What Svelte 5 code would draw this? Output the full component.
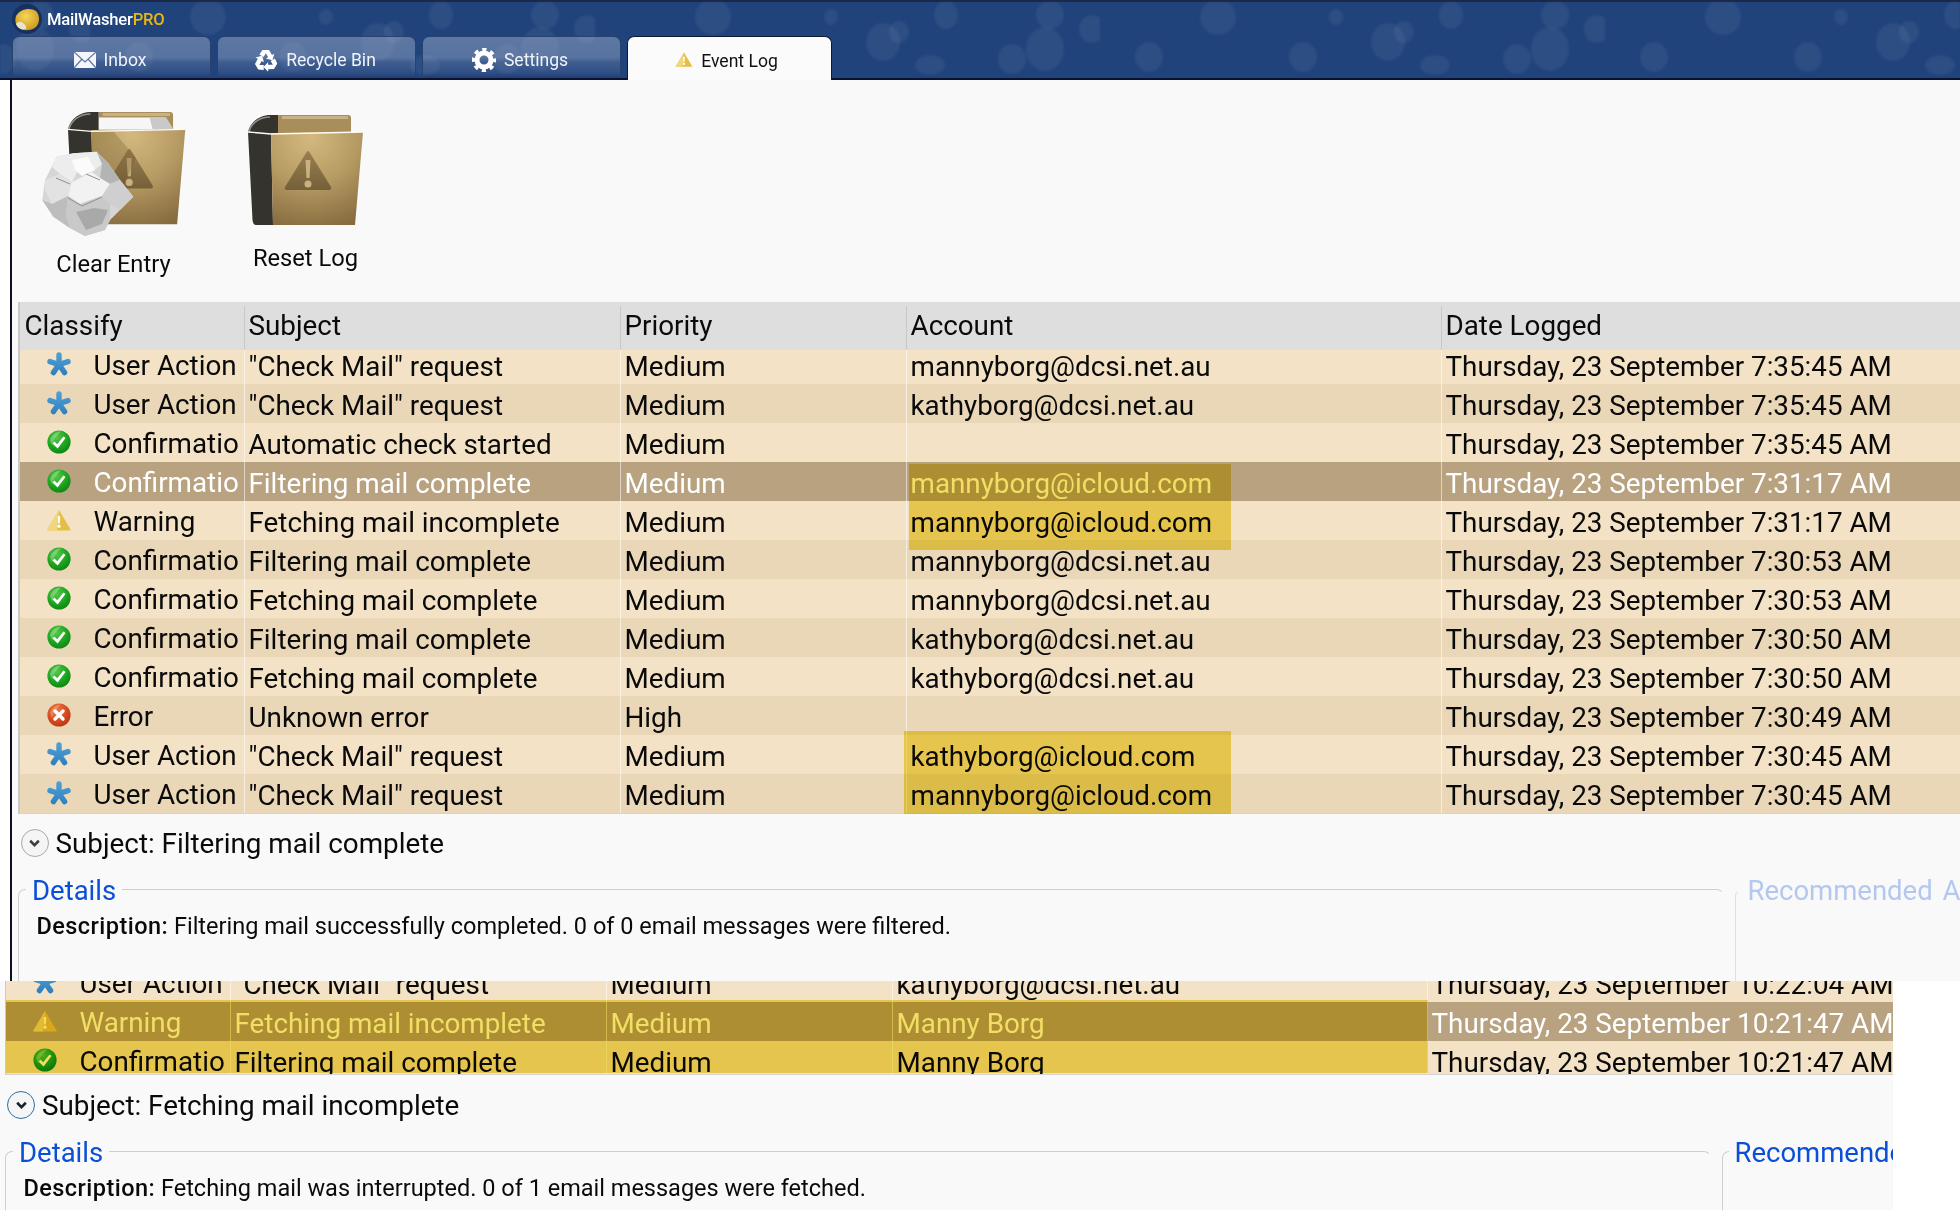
<script lang="ts">
	const tabs = [
		{ label: 'Inbox', icon: 'mail' },
		{ label: 'Recycle Bin', icon: 'recycle' },
		{ label: 'Settings', icon: 'gear' },
		{ label: 'Event Log', icon: 'warn', active: true }
	];

	const action = { icon: 'star', type: 'User Action', subject: '"Check Mail" request' };
	const ok = { icon: 'check', type: 'Confirmation' };
	const day = 'Thursday, 23 September ';

	const rows = [
		{ ...action, account: 'mannyborg@dcsi.net.au', time: '7:35:45 AM', cut: 'cut-top' },
		{ ...action, account: 'kathyborg@dcsi.net.au', time: '7:35:45 AM' },
		{ ...ok, subject: 'Automatic check started', account: '', time: '7:35:45 AM' },
		{ ...ok, subject: 'Filtering mail complete', account: 'mannyborg@icloud.com', time: '7:31:17 AM', selected: true },
		{ icon: 'warn', type: 'Warning', subject: 'Fetching mail incomplete', account: 'mannyborg@icloud.com', time: '7:31:17 AM' },
		{ ...ok, subject: 'Filtering mail complete', account: 'mannyborg@dcsi.net.au', time: '7:30:53 AM' },
		{ ...ok, subject: 'Fetching mail complete', account: 'mannyborg@dcsi.net.au', time: '7:30:53 AM' },
		{ ...ok, subject: 'Filtering mail complete', account: 'kathyborg@dcsi.net.au', time: '7:30:50 AM' },
		{ ...ok, subject: 'Fetching mail complete', account: 'kathyborg@dcsi.net.au', time: '7:30:50 AM' },
		{ icon: 'error', type: 'Error', subject: 'Unknown error', priority: 'High', account: '', time: '7:30:49 AM' },
		{ ...action, account: 'kathyborg@icloud.com', time: '7:30:45 AM' },
		{ ...action, account: 'mannyborg@icloud.com', time: '7:30:45 AM' }
	];

	const laterRows = [
		{ ...action, account: 'kathyborg@dcsi.net.au', time: '10:22:04 AM', cut: 'cut-top' },
		{ icon: 'warn', type: 'Warning', subject: 'Fetching mail incomplete', account: 'Manny Borg', time: '10:21:47 AM', selected: true },
		{ ...ok, subject: 'Filtering mail complete', account: 'Manny Borg', time: '10:21:47 AM', cut: 'cut-bottom' }
	];

	const blobs = [
		[49, 55, 14, 15], [118, 15, 18, 18], [203, 55, 14, 15], [236, 15, 7, 8], [288, 40, 17, 19],
		[304, 30, 10, 11], [335, 63, 15, 10], [351, 13, 12, 14], [417, 57, 14, 15], [450, 47, 19, 22],
		[455, 13, 14, 14], [497, 27, 13, 14]
	];
</script>

{#snippet icon(name)}
	{#if name === 'star'}
		<svg class="status" viewBox="0 0 24 24">
			<g stroke="url(#starBlue)" stroke-width="5.4" stroke-linecap="round">
				<path d="M12 12.5V3" />
				<path d="M12 12.5L3 9.6" />
				<path d="M12 12.5L21 9.6" />
				<path d="M12 12.5L6.4 20.6" />
				<path d="M12 12.5L17.6 20.6" />
			</g>
		</svg>
	{:else if name === 'check'}
		<svg class="status" viewBox="0 0 24 24">
			<circle cx="12" cy="12" r="11.6" fill="url(#okGreen)" />
			<path d="M3 10C5 4 10 1.5 14 1.5C10 5 7 9 5 15Z" fill="#fff" opacity=".28" />
			<path d="M5.5 13.5L7.5 11.5L10.2 14.2L16.5 6.5L18.5 8L10.6 18.5Z" fill="#fff" />
		</svg>
	{:else if name === 'error'}
		<svg class="status" viewBox="0 0 24 24">
			<circle cx="12" cy="12" r="11.6" fill="url(#errRed)" />
			<path d="M3 10C5 4 10 1.5 14 1.5C10 5 7 9 5 15Z" fill="#fff" opacity=".22" />
			<path d="M8 8L16 16M16 8L8 16" stroke="#fff" stroke-width="3.4" stroke-linecap="round" />
		</svg>
	{:else}
		<svg class="status" viewBox="0 0 24 24">
			<path d="M12 2L23.6 21.6Q24 22.4 23 22.4H1Q0 22.4 .4 21.6Z" fill="#e5bf45" />
			<path d="M12 2L.4 21.6Q0 22.4 1 22.4H10Z" fill="#f0d681" />
			<path d="M10.8 8H13.2L12.8 15.6H11.2Z" fill="#fff" />
			<circle cx="12" cy="18.2" r="1.6" fill="#fff" />
		</svg>
	{/if}
{/snippet}

{#snippet row(r, i)}
	<div class="row {r.cut ?? ''}" class:alt={i % 2 === 1} class:selected={r.selected}>
		<div class="cell classify">{@render icon(r.icon)}<span class="kind">{r.type}</span></div>
		<div class="cell">{r.subject}</div>
		<div class="cell">{r.priority ?? 'Medium'}</div>
		<div class="cell">{r.account}</div>
		<div class="cell">{day}{r.time}</div>
	</div>
{/snippet}

{#snippet book(pages)}
	<path d="M30 0H100Q103 0 103 3V20H30Z" fill="#a98e5c" />
	<path d="M34 1H100V4H34Z" fill="#c9b384" />
	{#if pages}
		<path d="M26 5H96L104 18H24Z" fill="#c9c9c9" />
		<path d="M30 6H80L83 17H28Z" fill="#f6f6f6" />
	{/if}
	<path d="M0 17C2 7 12 0 22 0H30V18L23 18L25 110H8Q5 110 4.500 105Z" fill="#35332e" />
	<path d="M1 17C3 8 12 2 22 2" fill="none" stroke="#8f8f8f" stroke-width="1.500" />
	<path d="M23 18L115 17L107 110H25Z" fill="url(#coverTan)" />
	<path d="M0 17L23 19L115 17" fill="none" stroke="#fdfbf3" stroke-width="1.300" />
	<path d="M60 36Q61 36 62 38L83 72Q84 75 81 75H39Q36 75 37 72L58 38Q59 36 60 36Z" fill="url(#markBrown)" />
	<path d="M57.500 45H62.500L61.500 63H58.500Z" fill="#c9b27f" />
	<circle cx="60" cy="69" r="3.500" fill="#c9b27f" />
{/snippet}

<svg class="defs" aria-hidden="true">
	<defs>
		<linearGradient id="starBlue" gradientUnits="userSpaceOnUse" x1="0" y1="2" x2="0" y2="23">
			<stop offset="0" stop-color="#4f9fd6" />
			<stop offset="1" stop-color="#2f7fbd" />
		</linearGradient>
		<radialGradient id="okGreen" cx=".4" cy=".3" r=".8">
			<stop offset="0" stop-color="#55c84a" />
			<stop offset=".6" stop-color="#1aa11c" />
			<stop offset="1" stop-color="#0b7d12" />
		</radialGradient>
		<radialGradient id="errRed" cx=".4" cy=".3" r=".8">
			<stop offset="0" stop-color="#ee7a45" />
			<stop offset=".6" stop-color="#d4481c" />
			<stop offset="1" stop-color="#b2300f" />
		</radialGradient>
		<radialGradient id="coverTan" gradientUnits="userSpaceOnUse" cx="62" cy="22" r="95">
			<stop offset="0" stop-color="#d3b97f" />
			<stop offset=".5" stop-color="#b69a63" />
			<stop offset="1" stop-color="#856b3e" />
		</radialGradient>
		<linearGradient id="markBrown" x1="0" y1="0" x2="0" y2="1">
			<stop offset="0" stop-color="#9a8050" />
			<stop offset="1" stop-color="#75603a" />
		</linearGradient>
		<radialGradient id="soapGold" cx=".45" cy=".35" r=".7">
			<stop offset="0" stop-color="#f6d65a" />
			<stop offset="1" stop-color="#c9961a" />
		</radialGradient>
		<pattern id="bubbles" width="505" height="80" patternUnits="userSpaceOnUse" x="90">
			{#each blobs as [cx, cy, rx, ry]}
				<ellipse {cx} {cy} {rx} {ry} fill="#fff" opacity=".06" />
			{/each}
		</pattern>
	</defs>
</svg>

<div class="page">
	<div class="first-shot">
		<header class="titlebar">
			<svg class="texture" width="100%" height="78"><rect width="100%" height="78" fill="url(#bubbles)" /></svg>
			<div class="brand">
				<svg class="logo" viewBox="0 0 30 30">
					<circle cx="15" cy="15" r="15" fill="#18305c" />
					<path d="M4 12C8 5 18 3 24 7C28 11 28 19 24 23C18 28 8 27 5 22C3 19 3 15 4 12Z" fill="url(#soapGold)" />
					<path d="M4 20Q7 16 11 19T14 25Q7 27 4 20Z" fill="#e8e4d2" />
				</svg>
				<span>MailWasher<b>PRO</b></span>
			</div>
			<nav class="tabs">
				{#each tabs as t}
					<div class="tab" class:active={t.active}>
						{#if t.icon === 'mail'}
							<svg class="tab-icon" viewBox="0 0 22 18">
								<path d="M0 1H22V17H0Z" fill="#f4f6fa" />
								<path d="M0 1L11 11L22 1M0 17L8 8M22 17L14 8" fill="none" stroke="#5d76a3" stroke-width="1.200" />
							</svg>
						{:else if t.icon === 'recycle'}
							<svg class="tab-icon tall" viewBox="0 0 24 24" fill="#fff">
								{#each [0, 120, 240] as a}
									<g transform="rotate({a} 12 13)">
										<path d="M8.500 2H15L18 7L20.300 5.700L18.400 12.200L11.900 10.600L14.200 9.300L11.800 5.200L9.600 9L5.400 6.600Z" />
									</g>
								{/each}
							</svg>
						{:else if t.icon === 'gear'}
							<svg class="tab-icon tall" viewBox="0 0 24 24">
								<circle cx="12" cy="12" r="7" fill="none" stroke="#fff" stroke-width="5" />
								<circle cx="12" cy="12" r="10.500" fill="none" stroke="#fff" stroke-width="3.600" stroke-dasharray="4.200 4.047" stroke-dashoffset="2.100" />
							</svg>
						{:else}
							<svg class="tab-icon warn" viewBox="0 0 24 24">
								<path d="M12 2L23.600 21.600Q24 22.400 23 22.400H1Q0 22.400 .4 21.600Z" fill="#e5bf45" />
								<path d="M12 2L.4 21.600Q0 22.400 1 22.400H10Z" fill="#f0d681" />
								<path d="M10.800 8H13.200L12.800 15.600H11.200Z" fill="#fff" />
								<circle cx="12" cy="18.200" r="1.600" fill="#fff" />
							</svg>
						{/if}
						<span>{t.label}</span>
					</div>
				{/each}
			</nav>
		</header>

		<main class="panel">
			<div class="toolbar">
				<button class="tool">
					<svg class="clear-icon" viewBox="0 0 144 124">
						<g transform="translate(26 0) scale(1.020)">{@render book(true)}</g>
						<path d="M50 20H72L94 46L80 78H50Z" fill="#6b5529" opacity=".28" />
						<!-- crumpled paper ball -->
						<path d="M14.700 44.700L31.300 41.300L54.700 39.700L66.300 51.300L78 68L91.300 84.700L78 98L68 108L63 118L43 124L28.300 116.300L11.300 104.700L.3 88L3 68L9.700 54.700Z" fill="#d6d6d6" />
						<path d="M14.700 44.700L31.300 41.300L54.700 39.700L60 52L50 60L36 58L30 70L18 62L9.700 54.700Z" fill="#ededed" />
						<path d="M30 48L46 45L53 58L40 64L33 58Z" fill="#fbfbfb" />
						<path d="M54.700 39.700L66.300 51.300L78 68L68 72L58 66L60 52Z" fill="#b4b4b4" />
						<path d="M18 62L30 70L26 84L10 92L3 78L3 68Z" fill="#e2e2e2" />
						<path d="M30 70L50 60L58 66L68 72L60 84L38 92L26 84Z" fill="#f2f2f2" />
						<path d="M68 72L78 68L91.300 84.700L78 98L68 92L60 84Z" fill="#cfcfcf" />
						<path d="M.3 88L10 92L26 84L24 104L28.300 116.300L11.300 104.700Z" fill="#bdbdbd" />
						<path d="M26 84L38 92L60 84L68 92L68 108L63 118L43 124L28.300 116.300L24 104Z" fill="#c9c9c9" />
						<path d="M34 100L52 96L66 98L60 112L44 118Z" fill="#a9a9a9" />
						<path d="M26 86L40 94L60 85M14 66L28 72M44 62L58 68" fill="none" stroke="#8f8f8f" stroke-width="1" />
					</svg>
					<span class="clear-label">Clear Entry</span>
				</button>
				<button class="tool">
					<svg class="reset-icon" viewBox="0 0 115 110">{@render book(false)}</svg>
					<span class="reset-label">Reset Log</span>
				</button>
			</div>

			<div class="table">
				<div class="row head">
					<div class="cell">Classify</div>
					<div class="cell">Subject</div>
					<div class="cell">Priority</div>
					<div class="cell">Account</div>
					<div class="cell">Date Logged</div>
				</div>
				{#each rows as r, i}
					{@render row(r, i)}
				{/each}
				<div class="marker m1"></div>
				<div class="marker m2"></div>
			</div>

			<div class="expander">
				<span class="chevron"><svg viewBox="0 0 12 8"><path d="M2 1.500L6 5.500L10 1.500" /></svg></span>
				Subject: Filtering mail complete
			</div>
			<div class="groups">
				<fieldset class="details">
					<legend>Details</legend>
					<p><b>Description:</b> Filtering mail successfully completed. 0 of 0 email messages were filtered.</p>
				</fieldset>
				<fieldset class="recommended disabled">
					<legend>Recommended Actions</legend>
				</fieldset>
			</div>
		</main>
	</div>

	<section class="second-shot">
		<div class="table later">
			{#each laterRows as r}
				{@render row(r, 0)}
			{/each}
			<div class="marker m3"></div>
		</div>
		<div class="expander">
			<span class="chevron focus"><svg viewBox="0 0 12 8"><path d="M2 1.500L6 5.500L10 1.500" /></svg></span>
			Subject: Fetching mail incomplete
		</div>
		<div class="groups">
			<fieldset class="details">
				<legend>Details</legend>
				<p><b>Description:</b> Fetching mail was interrupted. 0 of 1 email messages were fetched.</p>
			</fieldset>
			<fieldset class="recommended">
				<legend>Recommended Actions</legend>
			</fieldset>
		</div>
	</section>
</div>

<style>
	:global(body) {
		margin: 0;
		background: #fff;
	}

	.defs { position: absolute; width: 0; height: 0; }

	.page {
		width: 1960px;
		height: 1223px;
		overflow: hidden;
		background: #fff;
		font-family: Roboto, "Open Sans", sans-serif;
		font-size: 27.800px;
		color: #0a0a0a;
	}

	.first-shot {
		height: 981px;
		display: flex;
		flex-direction: column;
		background: #fff;
	}

	.titlebar {
		position: relative;
		z-index: 1;
		height: 80px;
		flex: none;
		box-sizing: border-box;
		background: #20437c;
		border-top: 2px solid #1b2848;
		border-bottom: 2px solid #0b1230;
	}
	.texture { position: absolute; left: 0; top: 0; filter: blur(1px); }

	.brand {
		position: relative;
		height: 34px;
		display: flex;
		align-items: center;
		padding-left: 12px;
		gap: 5px;
		color: #fff;
		font-size: 16.600px;
		font-weight: 500;
		letter-spacing: -.2px;
	}
	.brand b { color: #eab60f; font-weight: 500; }
	.logo { width: 30px; height: 30px; }

	.tabs {
		position: relative;
		display: flex;
		height: 42px;
		padding-left: 12px;
		gap: 6px;
	}
	.tab {
		width: 199px;
		height: 42px;
		box-sizing: border-box;
		display: flex;
		align-items: center;
		justify-content: center;
		gap: 8px;
		padding-top: 5px;
		padding-right: 3px;
		border: 1px solid #27426f;
		border-bottom: none;
		border-radius: 7px 7px 0 0;
		background: linear-gradient(rgba(178, 192, 216, .42), rgba(170, 186, 214, .4) 50%, rgba(120, 140, 180, .34) 62%, rgba(110, 130, 170, .22) 85%, rgba(20, 40, 90, .2));
		color: #f1f4f9;
		font-size: 17.600px;
	}
	.tab.active {
		width: 205px;
		height: 44px;
		padding-right: 6px;
		padding-top: 4px;
		background: #fbfbfb;
		border-color: #10182f;
		color: #111;
	}
	.tab-icon { width: 22px; height: 18px; }
	.tab-icon.tall { width: 24px; height: 24px; }
	.tab-icon.warn { width: 18px; height: 17px; margin-top: -3px; }

	.panel {
		flex: 1;
		min-height: 0;
		overflow: hidden;
		margin-left: 10px;
		border-left: 2.500px solid #0b1022;
		background: #f9f9f9;
	}

	.toolbar {
		height: 222px;
		box-sizing: border-box;
		display: flex;
		align-items: flex-start;
		gap: 44px;
		padding: 32px 0 0 27.500px;
	}
	.tool {
		width: 148px;
		padding: 0;
		display: flex;
		flex-direction: column;
		align-items: center;
		background: none;
		border: none;
		font: inherit;
		font-size: 23.700px;
		color: #0a0a0a;
		line-height: 36px;
	}
	.clear-icon { width: 144px; height: 124px; }
	.clear-label { margin-top: 10px; }
	.reset-icon { width: 115px; height: 110px; margin-top: 3px; }
	.reset-label { margin-top: 15px; }

	.table {
		position: relative;
		margin-left: 5.500px;
		border-left: 2px solid #c9c9c9;
		border-bottom: 1px solid #d4d4d4;
	}
	.row {
		display: grid;
		grid-template-columns: 225px 376px 286px 535px 1fr;
		height: 39px;
		background: #f3e2c5;
		overflow: hidden;
		white-space: nowrap;
	}
	.row.cut-top { height: 34px; align-content: end; }
	.row.alt { background: #e9d7b8; }
	.row.selected { background: #b8a280; color: #fff; }

	.row.head {
		height: 48px;
		background: #dedede;
		align-content: end;
	}
	.head .cell {
		height: 44px;
		padding-top: 0;
		line-height: 40px;
		border-right: 1.500px solid #c8c8c8;
	}
	.head .cell:first-child { padding-left: 5px; }

	.cell {
		height: 39px;
		box-sizing: border-box;
		min-width: 0;
		overflow: hidden;
		padding-top: 1px;
		padding-left: 4px;
		line-height: 41px;
		border-right: 1.500px solid rgba(255, 255, 255, .55);
	}
	.cell:last-child { border-right: none; }

	.classify {
		display: flex;
		align-items: center;
		padding-left: 27px;
		padding-right: 5px;
	}
	.status { width: 24px; height: 24px; flex: none; margin-top: -3px; }
	.kind { margin-left: 23px; min-width: 0; overflow: hidden; }

	.marker {
		position: absolute;
		background: #f1df65;
		mix-blend-mode: multiply;
	}
	.m1 { left: 889px; top: 162px; width: 322px; height: 86px; }
	.m2 { left: 884px; top: 429px; width: 327px; height: 83px; }
	.m3 { left: 0; top: 19px; width: 1422px; height: 73px; }

	.expander {
		display: flex;
		align-items: center;
		gap: 7px;
		height: 32px;
		margin: 13px 0 0 8.500px;
		font-size: 27.800px;
	}
	.chevron {
		width: 28px;
		height: 28px;
		flex: none;
		box-sizing: border-box;
		display: flex;
		align-items: center;
		justify-content: center;
		border: 1.500px solid #a9a9a9;
		border-radius: 50%;
		background: #f5f5f5;
	}
	.chevron.focus { border-color: #2f6f9f; }
	.chevron svg { width: 13px; height: 9px; }
	.chevron path { fill: none; stroke: #3f3f3f; stroke-width: 2.400; }
	.chevron.focus path { stroke: #17222c; }

	.groups {
		display: flex;
		gap: 11px;
		margin: 11px 0 0 5.500px;
		height: 200px;
		overflow: hidden;
	}
	fieldset {
		margin: 0;
		min-width: 0;
		flex: none;
		height: 200px;
		box-sizing: border-box;
		padding: 0;
		border: 1px solid #cfcfcf;
		border-bottom: none;
		border-right-color: transparent;
		border-radius: 7px 7px 0 0;
	}
	legend {
		margin-left: 7.500px;
		padding: 4px 6px 0;
		color: #0a4fd6;
		font-size: 27.500px;
		line-height: 34px;
		white-space: nowrap;
		word-spacing: 3px;
	}
	.details { width: 1706px; }
	.recommended { width: 400px; }
	.recommended legend { margin-left: 6px; }
	.disabled { border-color: #e0e0e0; border-right-color: transparent; border-top-color: transparent; }
	.disabled legend { color: #b4c8ef; }

	p {
		margin: 1px 0 0 18px;
		font-size: 23.500px;
		line-height: 34px;
		white-space: nowrap;
	}
	p b { font-weight: 500; letter-spacing: .45px; }

	.second-shot {
		width: 1893px;
		height: 229px;
		overflow: hidden;
		background: #f9f9f9;
	}
	.later {
		margin-left: 4.500px;
		border-left-width: 1.500px;
		border-bottom-width: 1.500px;
	}
	.later .row.cut-top { height: 21px; }
	.later .row.cut-bottom { height: 33px; }
	.second-shot .expander { margin: 14px 0 0 7px; }
	.second-shot .groups { margin: 11px 0 0 4.500px; }
</style>
